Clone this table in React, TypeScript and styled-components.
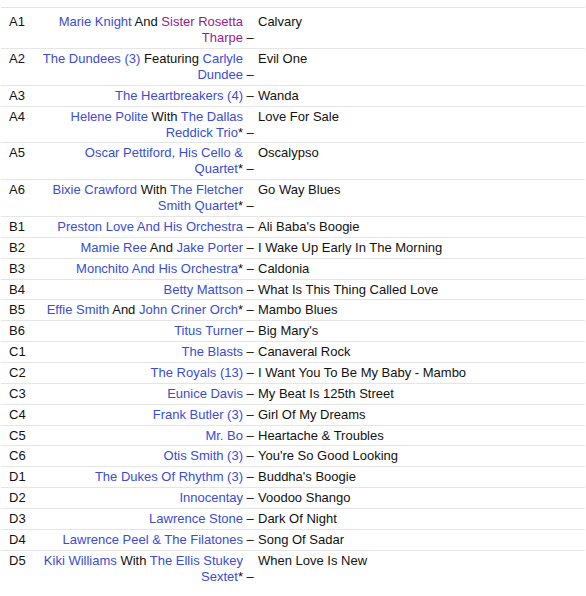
import React from 'react'
import styled, { createGlobalStyle } from 'styled-components'

const GlobalStyle = createGlobalStyle`
	body {
		margin: 0;
		background: #fff;
		font-family: "Liberation Sans", Arial, Helvetica, sans-serif;
	}
`

export const Tracklist = styled.div`
	padding: 7px 1px 0 1px;
	font-size: 13px;
	line-height: 16px;
	color: #111;
`
export const Row = styled.div`
	display: grid;
	grid-template-columns: 37px 216px 1fr;
	border-top: 1px solid #e5e5e5;
	padding: 2px 0 1.85px;

	&:first-child {
		padding-top: 6px;
	}
`
export const Pos = styled.div`
	padding-left: 8px;
`
export const Artists = styled.div`
	text-align: right;
	padding-right: 11px;
`
// zero-width so the dash hangs into the padding and never forces a wrap
export const Dash = styled.span`
	display: inline-block;
	width: 0;
	white-space: nowrap;
	text-align: left;
	vertical-align: top;
`
export const Title = styled.div`
	padding-left: 4px;
`
export const ArtistLink = styled.a<{ $visited?: boolean }>`
	color: ${(p) => (p.$visited ? '#9a1b8a' : '#3a4cd6')};
	text-decoration: none;
	cursor: pointer;
`

type Part = string | { name: string; visited?: boolean }

type Track = {
	pos: string
	artists: Part[]
	title: string
}

const tracks: Track[] = [
	{ pos: 'A1', artists: [{ name: 'Marie Knight' }, ' And ', { name: 'Sister Rosetta Tharpe', visited: true }], title: 'Calvary' },
	{ pos: 'A2', artists: [{ name: 'The Dundees (3)' }, ' Featuring ', { name: 'Carlyle Dundee' }], title: 'Evil One' },
	{ pos: 'A3', artists: [{ name: 'The Heartbreakers (4)' }], title: 'Wanda' },
	{ pos: 'A4', artists: [{ name: 'Helene Polite' }, ' With ', { name: 'The Dallas Reddick Trio' }, '*'], title: 'Love For Sale' },
	{ pos: 'A5', artists: [{ name: 'Oscar Pettiford, His Cello & Quartet' }, '*'], title: 'Oscalypso' },
	{ pos: 'A6', artists: [{ name: 'Bixie Crawford' }, ' With ', { name: 'The Fletcher Smith Quartet' }, '*'], title: 'Go Way Blues' },
	{ pos: 'B1', artists: [{ name: 'Preston Love And His Orchestra' }], title: "Ali Baba's Boogie" },
	{ pos: 'B2', artists: [{ name: 'Mamie Ree' }, ' And ', { name: 'Jake Porter' }], title: 'I Wake Up Early In The Morning' },
	{ pos: 'B3', artists: [{ name: 'Monchito And His Orchestra' }, '*'], title: 'Caldonia' },
	{ pos: 'B4', artists: [{ name: 'Betty Mattson' }], title: 'What Is This Thing Called Love' },
	{ pos: 'B5', artists: [{ name: 'Effie Smith' }, ' And ', { name: 'John Criner Orch' }, '*'], title: 'Mambo Blues' },
	{ pos: 'B6', artists: [{ name: 'Titus Turner' }], title: "Big Mary's" },
	{ pos: 'C1', artists: [{ name: 'The Blasts' }], title: 'Canaveral Rock' },
	{ pos: 'C2', artists: [{ name: 'The Royals (13)' }], title: 'I Want You To Be My Baby - Mambo' },
	{ pos: 'C3', artists: [{ name: 'Eunice Davis' }], title: 'My Beat Is 125th Street' },
	{ pos: 'C4', artists: [{ name: 'Frank Butler (3)' }], title: 'Girl Of My Dreams' },
	{ pos: 'C5', artists: [{ name: 'Mr. Bo' }], title: 'Heartache & Troubles' },
	{ pos: 'C6', artists: [{ name: 'Otis Smith (3)' }], title: "You're So Good Looking" },
	{ pos: 'D1', artists: [{ name: 'The Dukes Of Rhythm (3)' }], title: "Buddha's Boogie" },
	{ pos: 'D2', artists: [{ name: 'Innocentay' }], title: 'Voodoo Shango' },
	{ pos: 'D3', artists: [{ name: 'Lawrence Stone' }], title: 'Dark Of Night' },
	{ pos: 'D4', artists: [{ name: 'Lawrence Peel & The Filatones' }], title: 'Song Of Sadar' },
	{ pos: 'D5', artists: [{ name: 'Kiki Williams' }, ' With ', { name: 'The Ellis Stukey Sextet' }, '*'], title: 'When Love Is New' },
]

const App = () => {
	return (
		<>
			<GlobalStyle />
			<Tracklist>
				{tracks.map((t) => (
					<Row key={t.pos}>
						<Pos>{t.pos}</Pos>
						<Artists>
							{t.artists.map((a, i) =>
								typeof a === 'string' ? (
									<React.Fragment key={i}>{a}</React.Fragment>
								) : (
									<ArtistLink key={i} $visited={a.visited}>
										{a.name}
									</ArtistLink>
								)
							)}
							<Dash>{'\u00a0–'}</Dash>
						</Artists>
						<Title>{t.title}</Title>
					</Row>
				))}
			</Tracklist>
		</>
	)
}

export default App
